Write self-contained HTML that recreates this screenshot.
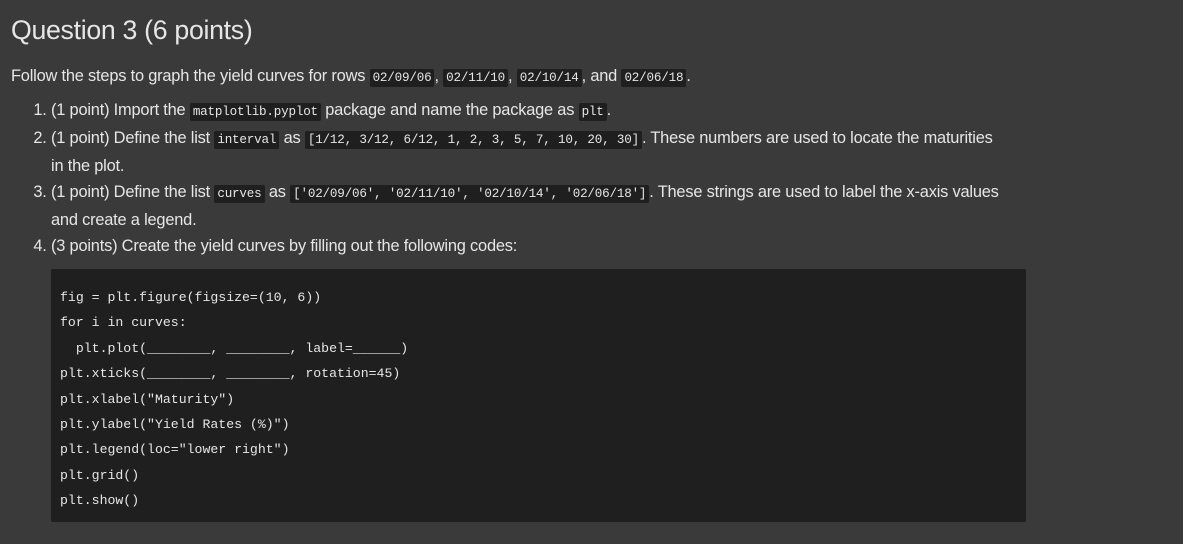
<!DOCTYPE html>
<html><head><style>
html,body{margin:0;padding:0;background:#3a3a3a;width:1183px;height:544px;overflow:hidden}
body{font-family:"Liberation Sans",sans-serif;color:#e6e6e6;font-size:16.4px}
h1{font-weight:normal;font-size:26.7px;margin:0;position:absolute;left:11px;top:15px;letter-spacing:-0.3px}
.intro{position:absolute;left:11px;top:67px;margin:0;letter-spacing:-0.2px}
code{font-family:"Liberation Mono",monospace;font-size:12.6px;background:#1f1f1f;padding:2px 3px;border-radius:2px}
ol{position:absolute;left:0;top:97px;margin:0;padding-left:51px;width:975px;line-height:26px;letter-spacing:-0.2px}
.code{position:absolute;left:51px;top:269px;width:975px;height:253px;background:#1f1f1f;border-radius:2px}
.code pre{margin:0;position:absolute;left:9px;top:16px;font-family:"Liberation Mono",monospace;font-size:13.2px;line-height:25.4px;color:#e6e6e6}
</style></head><body>
<h1>Question 3 (6 points)</h1>
<p class="intro">Follow the steps to graph the yield curves for rows <code>02/09/06</code>, <code>02/11/10</code>, <code>02/10/14</code>, and <code>02/06/18</code>.</p>
<ol>
<li>(1 point) Import the <code>matplotlib.pyplot</code> package and name the package as <code>plt</code>.</li>
<li>(1 point) Define the list <code>interval</code> as <code>[1/12, 3/12, 6/12, 1, 2, 3, 5, 7, 10, 20, 30]</code>. These numbers are used to locate the maturities<br>in the plot.</li>
<li>(1 point) Define the list <code>curves</code> as <code>['02/09/06', '02/11/10', '02/10/14', '02/06/18']</code>. These strings are used to label the x-axis values<br>and create a legend.</li>
<li>(3 points) Create the yield curves by filling out the following codes:</li>
</ol>
<div class="code"><pre>fig = plt.figure(figsize=(10, 6))
for i in curves:
  plt.plot(________, ________, label=______)
plt.xticks(________, ________, rotation=45)
plt.xlabel("Maturity")
plt.ylabel("Yield Rates (%)")
plt.legend(loc="lower right")
plt.grid()
plt.show()</pre></div>
</body></html>
